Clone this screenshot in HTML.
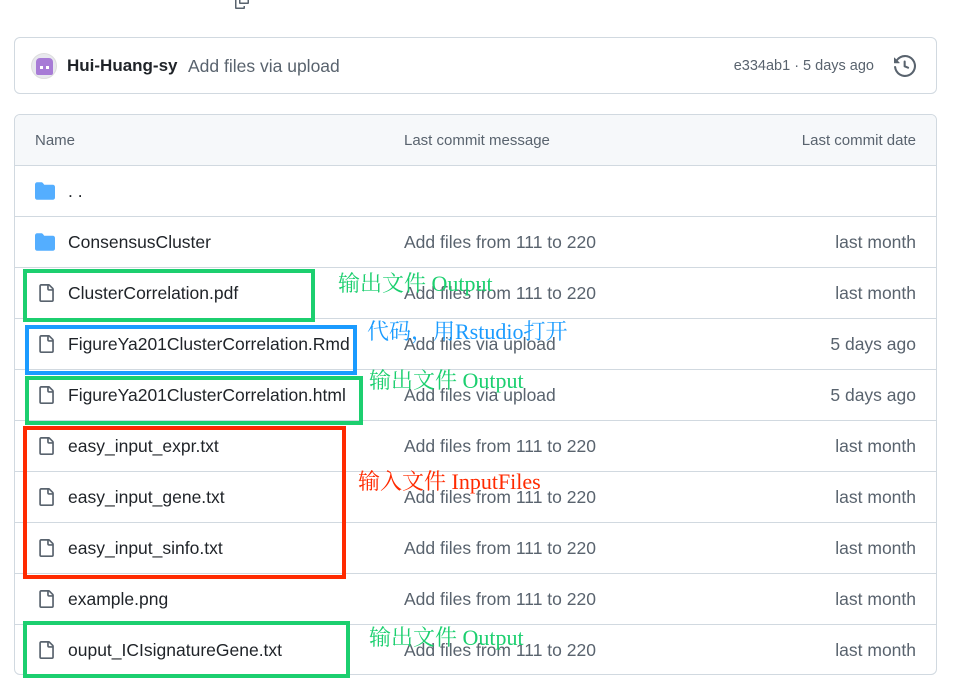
<!DOCTYPE html>
<html><head><meta charset="utf-8"><style>
*{box-sizing:border-box}
body{margin:0;width:959px;height:694px;background:#fff;font-family:"Liberation Sans","Noto Sans CJK SC",sans-serif;position:relative;overflow:hidden;color:#1f2328}
.commit{position:absolute;left:14px;top:37px;width:923px;height:57px;border:1px solid #d1d9e0;border-radius:6px}
.av{position:absolute;left:16px;top:15px;width:26px;height:26px;border-radius:50%;background:#e8e8ee;border:1px solid #ddd}
.av:before{content:"";position:absolute;left:4px;top:4px;width:17px;height:17px;background:#a77bd6;border-radius:4px 4px 2px 2px}
.av:after{content:"";position:absolute;left:8px;top:12px;width:3px;height:3px;background:#fff;box-shadow:6px 0 0 #fff}
.table{position:absolute;left:14px;top:114px;width:923px;height:561px;border:1px solid #d1d9e0;border-radius:6px;overflow:hidden}
.hdr{height:51px;background:#f6f8fa;border-bottom:1px solid #d1d9e0;font-size:15px;color:#59636e;position:relative}
.row{height:51px;border-bottom:1px solid #d1d9e0;position:relative;font-size:17.5px}
.row:last-child{border-bottom:none}
.c1{position:absolute;left:53px;top:15px}
.c2{position:absolute;left:389px;top:15px;color:#59636e}
.c3{position:absolute;right:20px;top:15px;color:#59636e}
.fi{position:absolute;left:22px;top:15px}
.box{position:absolute;border:4px solid}
.lbl{position:absolute;font-family:"Liberation Serif","Noto Serif CJK SC",serif;font-size:22px;white-space:nowrap}
</style></head><body>
<svg style="position:absolute;left:233px;top:-6px" width="18" height="16" viewBox="0 0 16 16"><path d="M2 4h2v1.5H2.5v8h7V12H11v2a1 1 0 0 1-1 1H2a1 1 0 0 1-1-1V5a1 1 0 0 1 1-1zM6 0h8a1 1 0 0 1 1 1v8a1 1 0 0 1-1 1H6a1 1 0 0 1-1-1V1a1 1 0 0 1 1-1zm.5 1.5v7h7v-7z" fill="#59636e"/></svg>
<div class="commit">
 <div class="av"></div>
 <span style="position:absolute;left:52px;top:18px;font-size:17px;font-weight:bold">Hui-Huang-sy</span>
 <span style="position:absolute;left:173px;top:18px;font-size:17.5px;color:#59636e">Add files via upload</span>
 <span style="position:absolute;right:62px;top:20px;font-size:14.5px;color:#59636e">e334ab1 · 5 days ago</span>
 <svg style="position:absolute;right:20px;top:17px" width="22" height="22" viewBox="0 0 16 16"><path d="M1.643 3.143.427 1.927A.25.25 0 0 0 0 2.104V5.75c0 .138.112.25.25.25h3.646a.25.25 0 0 0 .177-.427L2.715 4.215a6.5 6.5 0 1 1-1.18 4.458.75.75 0 1 0-1.493.154 8.001 8.001 0 1 0 1.6-5.684ZM7.750 4a.75.75 0 0 1 .75.75v2.992l2.028.812a.75.75 0 0 1-.557 1.392l-2.5-1A.751.751 0 0 1 7 8.250v-3.5A.75.75 0 0 1 7.75 4Z" fill="#59636e"/></svg>
</div>
<div class="table">
 <div class="hdr"><span style="position:absolute;left:20px;top:17px">Name</span><span style="position:absolute;left:389px;top:17px">Last commit message</span><span style="position:absolute;right:20px;top:17px">Last commit date</span></div>
 <div class="row"><svg class="fi" width="22" height="20" viewBox="0 0 16 16" style="left:19px"><path d="M1.75 1A1.75 1.75 0 0 0 0 2.75v10.5C0 14.216.784 15 1.75 15h12.5A1.75 1.75 0 0 0 16 13.25v-8.5A1.75 1.75 0 0 0 14.25 3H7.5a.25.25 0 0 1-.2-.1l-.9-1.2C6.07 1.26 5.55 1 5 1H1.75Z" fill="#54aeff"/></svg><span class="c1">. .</span></div>
 <div class="row"><svg class="fi" width="22" height="20" viewBox="0 0 16 16" style="left:19px"><path d="M1.75 1A1.75 1.75 0 0 0 0 2.75v10.5C0 14.216.784 15 1.75 15h12.5A1.75 1.75 0 0 0 16 13.25v-8.5A1.75 1.75 0 0 0 14.25 3H7.5a.25.25 0 0 1-.2-.1l-.9-1.2C6.07 1.26 5.55 1 5 1H1.75Z" fill="#54aeff"/></svg><span class="c1">ConsensusCluster</span><span class="c2">Add files from 111 to 220</span><span class="c3">last month</span></div>
 <div class="row"><svg class="fi" width="18" height="20" viewBox="0 0 16 16"><path d="M2 1.75C2 .784 2.784 0 3.75 0h6.586c.464 0 .909.184 1.237.513l2.914 2.914c.329.328.513.773.513 1.237v9.586A1.75 1.75 0 0 1 13.25 16h-9.5A1.75 1.75 0 0 1 2 14.25Zm1.75-.25a.25.25 0 0 0-.25.25v12.5c0 .138.112.25.25.25h9.5a.25.25 0 0 0 .25-.25V6h-2.75A1.75 1.75 0 0 1 9 4.25V1.5Zm6.75.062V4.25c0 .138.112.25.25.25h2.688l-.011-.013-2.914-2.914-.013-.011Z" fill="#59636e"/></svg><span class="c1">ClusterCorrelation.pdf</span><span class="c2">Add files from 111 to 220</span><span class="c3">last month</span></div>
 <div class="row"><svg class="fi" width="18" height="20" viewBox="0 0 16 16"><path d="M2 1.75C2 .784 2.784 0 3.75 0h6.586c.464 0 .909.184 1.237.513l2.914 2.914c.329.328.513.773.513 1.237v9.586A1.75 1.75 0 0 1 13.25 16h-9.5A1.75 1.75 0 0 1 2 14.25Zm1.75-.25a.25.25 0 0 0-.25.25v12.5c0 .138.112.25.25.25h9.5a.25.25 0 0 0 .25-.25V6h-2.75A1.75 1.75 0 0 1 9 4.25V1.5Zm6.75.062V4.25c0 .138.112.25.25.25h2.688l-.011-.013-2.914-2.914-.013-.011Z" fill="#59636e"/></svg><span class="c1">FigureYa201ClusterCorrelation.Rmd</span><span class="c2">Add files via upload</span><span class="c3">5 days ago</span></div>
 <div class="row"><svg class="fi" width="18" height="20" viewBox="0 0 16 16"><path d="M2 1.75C2 .784 2.784 0 3.75 0h6.586c.464 0 .909.184 1.237.513l2.914 2.914c.329.328.513.773.513 1.237v9.586A1.75 1.75 0 0 1 13.25 16h-9.5A1.75 1.75 0 0 1 2 14.25Zm1.75-.25a.25.25 0 0 0-.25.25v12.5c0 .138.112.25.25.25h9.5a.25.25 0 0 0 .25-.25V6h-2.75A1.75 1.75 0 0 1 9 4.25V1.5Zm6.75.062V4.25c0 .138.112.25.25.25h2.688l-.011-.013-2.914-2.914-.013-.011Z" fill="#59636e"/></svg><span class="c1">FigureYa201ClusterCorrelation.html</span><span class="c2">Add files via upload</span><span class="c3">5 days ago</span></div>
 <div class="row"><svg class="fi" width="18" height="20" viewBox="0 0 16 16"><path d="M2 1.75C2 .784 2.784 0 3.75 0h6.586c.464 0 .909.184 1.237.513l2.914 2.914c.329.328.513.773.513 1.237v9.586A1.75 1.75 0 0 1 13.25 16h-9.5A1.75 1.75 0 0 1 2 14.25Zm1.75-.25a.25.25 0 0 0-.25.25v12.5c0 .138.112.25.25.25h9.5a.25.25 0 0 0 .25-.25V6h-2.75A1.75 1.75 0 0 1 9 4.25V1.5Zm6.75.062V4.25c0 .138.112.25.25.25h2.688l-.011-.013-2.914-2.914-.013-.011Z" fill="#59636e"/></svg><span class="c1">easy_input_expr.txt</span><span class="c2">Add files from 111 to 220</span><span class="c3">last month</span></div>
 <div class="row"><svg class="fi" width="18" height="20" viewBox="0 0 16 16"><path d="M2 1.75C2 .784 2.784 0 3.75 0h6.586c.464 0 .909.184 1.237.513l2.914 2.914c.329.328.513.773.513 1.237v9.586A1.75 1.75 0 0 1 13.25 16h-9.5A1.75 1.75 0 0 1 2 14.25Zm1.75-.25a.25.25 0 0 0-.25.25v12.5c0 .138.112.25.25.25h9.5a.25.25 0 0 0 .25-.25V6h-2.75A1.75 1.75 0 0 1 9 4.25V1.5Zm6.75.062V4.25c0 .138.112.25.25.25h2.688l-.011-.013-2.914-2.914-.013-.011Z" fill="#59636e"/></svg><span class="c1">easy_input_gene.txt</span><span class="c2">Add files from 111 to 220</span><span class="c3">last month</span></div>
 <div class="row"><svg class="fi" width="18" height="20" viewBox="0 0 16 16"><path d="M2 1.75C2 .784 2.784 0 3.75 0h6.586c.464 0 .909.184 1.237.513l2.914 2.914c.329.328.513.773.513 1.237v9.586A1.75 1.75 0 0 1 13.25 16h-9.5A1.75 1.75 0 0 1 2 14.25Zm1.75-.25a.25.25 0 0 0-.25.25v12.5c0 .138.112.25.25.25h9.5a.25.25 0 0 0 .25-.25V6h-2.75A1.75 1.75 0 0 1 9 4.25V1.5Zm6.75.062V4.25c0 .138.112.25.25.25h2.688l-.011-.013-2.914-2.914-.013-.011Z" fill="#59636e"/></svg><span class="c1">easy_input_sinfo.txt</span><span class="c2">Add files from 111 to 220</span><span class="c3">last month</span></div>
 <div class="row"><svg class="fi" width="18" height="20" viewBox="0 0 16 16"><path d="M2 1.75C2 .784 2.784 0 3.75 0h6.586c.464 0 .909.184 1.237.513l2.914 2.914c.329.328.513.773.513 1.237v9.586A1.75 1.75 0 0 1 13.25 16h-9.5A1.75 1.75 0 0 1 2 14.25Zm1.75-.25a.25.25 0 0 0-.25.25v12.5c0 .138.112.25.25.25h9.5a.25.25 0 0 0 .25-.25V6h-2.75A1.75 1.75 0 0 1 9 4.25V1.5Zm6.75.062V4.25c0 .138.112.25.25.25h2.688l-.011-.013-2.914-2.914-.013-.011Z" fill="#59636e"/></svg><span class="c1">example.png</span><span class="c2">Add files from 111 to 220</span><span class="c3">last month</span></div>
 <div class="row"><svg class="fi" width="18" height="20" viewBox="0 0 16 16"><path d="M2 1.75C2 .784 2.784 0 3.75 0h6.586c.464 0 .909.184 1.237.513l2.914 2.914c.329.328.513.773.513 1.237v9.586A1.75 1.75 0 0 1 13.25 16h-9.5A1.75 1.75 0 0 1 2 14.25Zm1.75-.25a.25.25 0 0 0-.25.25v12.5c0 .138.112.25.25.25h9.5a.25.25 0 0 0 .25-.25V6h-2.75A1.75 1.75 0 0 1 9 4.25V1.5Zm6.75.062V4.25c0 .138.112.25.25.25h2.688l-.011-.013-2.914-2.914-.013-.011Z" fill="#59636e"/></svg><span class="c1">ouput_ICIsignatureGene.txt</span><span class="c2">Add files from 111 to 220</span><span class="c3">last month</span></div>
</div>
<div class="box" style="left:23px;top:269px;width:292px;height:53px;border-color:#1ccf6f"></div>
<div class="box" style="left:25px;top:325px;width:332px;height:50px;border-color:#1a9bff"></div>
<div class="box" style="left:25px;top:376px;width:338px;height:49px;border-color:#1ccf6f"></div>
<div class="box" style="left:23px;top:426px;width:323px;height:153px;border-color:#ff2a00"></div>
<div class="box" style="left:23px;top:621px;width:327px;height:57px;border-color:#1ccf6f"></div>
<div class="lbl" style="left:338px;top:267px;color:#1ccf6f">输出文件 Output</div>
<div class="lbl" style="left:367px;top:315px;color:#1a9bff">代码，用Rstudio打开</div>
<div class="lbl" style="left:369px;top:364px;color:#1ccf6f">输出文件 Output</div>
<div class="lbl" style="left:358px;top:465px;color:#ff2a00">输入文件 InputFiles</div>
<div class="lbl" style="left:369px;top:621px;color:#1ccf6f">输出文件 Output</div>
</body></html>
